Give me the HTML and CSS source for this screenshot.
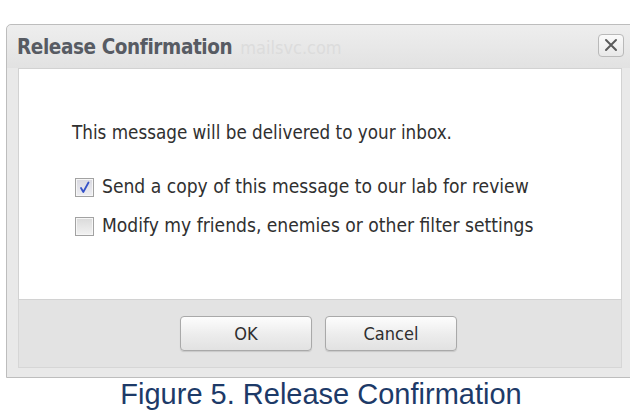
FILE: index.html
```html
<!DOCTYPE html>
<html lang="en">
<head>
<meta charset="utf-8">
<title>Release Confirmation</title>
<link rel="stylesheet" href="styles.css">
</head>
<body>
<div class="page">
  <div class="dialog">
    <div class="titlebar">
      <div class="title">Release Confirmation<span class="ghost">mailsvc.com</span></div>
      <button class="close" aria-label="Close">
        <svg width="14" height="14" viewBox="0 0 14 14"><path d="M2 2 L12 12 M12 2 L2 12" stroke="#5a5a5a" stroke-width="2" stroke-linecap="round"/></svg>
      </button>
    </div>
    <div class="body">
      <p class="message">This message will be delivered to your inbox.</p>
      <label class="option">
        <span class="check checked">
          <svg width="13" height="13" viewBox="0 0 13 13"><path d="M3 7 L5.3 11 L10.5 1.5" fill="none" stroke="#3552c8" stroke-width="1.8" stroke-linecap="round" stroke-linejoin="round"/></svg>
        </span>
        Send a copy of this message to our lab for review
      </label>
      <label class="option">
        <span class="check"></span>
        Modify my friends, enemies or other filter settings
      </label>
    </div>
    <div class="footer">
      <button class="btn">OK</button>
      <button class="btn">Cancel</button>
    </div>
  </div>
  <div class="caption">Figure 5. Release Confirmation</div>
</div>
</body>
</html>
```

FILE: styles.css
```css
html, body {
  margin: 0;
  padding: 0;
  background: #ffffff;
  overflow: hidden;
}

.page {
  width: 630px;
  height: 417px;
  overflow: hidden;
  padding-top: 24px;
  box-sizing: border-box;
}

.dialog {
  margin-left: 6px;
  width: 626px;
  border: 1px solid #bdbdbd;
  border-radius: 5px 0 0 0;
  background: #e9e9e9;
  padding: 0 9px 9px 11px;
  box-sizing: border-box;
  font-family: "DejaVu Sans Condensed", "DejaVu Sans", sans-serif;
}

.titlebar {
  height: 43px;
  margin: 0 -9px 0 -11px;
  padding: 0 7px 0 10px;
  display: flex;
  align-items: center;
  justify-content: space-between;
  background: linear-gradient(#eeeeee, #e2e2e2);
  border-radius: 5px 0 0 0;
}

.title {
  font-size: 20.5px;
  font-weight: bold;
  color: #575b63;
  letter-spacing: -0.4px;
  margin-top: 1px;
  white-space: nowrap;
}

.ghost {
  margin-left: 8px;
  font-weight: normal;
  font-size: 18px;
  color: #dcdcdc;
  letter-spacing: 0;
}

.close {
  width: 26px;
  height: 23px;
  margin-top: -3px;
  padding: 0;
  border: 1px solid #b9b9b9;
  border-radius: 4px;
  background: linear-gradient(#fafafa, #e8e8e8);
  display: flex;
  align-items: center;
  justify-content: center;
}

.body {
  width: 604px;
  height: 232px;
  box-sizing: border-box;
  background: #ffffff;
  border: 1px solid #d2d2d2;
  padding: 52px 0 0 53px;
  color: #303030;
  font-size: 18.7px;
}

.message {
  margin: 0 0 31px 0;
  line-height: 24px;
}

.option {
  display: flex;
  align-items: center;
  gap: 8px;
  height: 22px;
  margin-bottom: 17px;
  margin-left: 3px;
  line-height: 22px;
  font-size: 19.1px;
  white-space: nowrap;
}

.check {
  width: 19px;
  height: 19px;
  box-sizing: border-box;
  border: 1px solid #a2a2a2;
  box-shadow: inset 0 0 0 1px #f6f6f6;
  background: linear-gradient(#dadada, #f2f2f2);
  display: flex;
  align-items: center;
  justify-content: center;
  flex: none;
}

.check.checked {
  background: linear-gradient(#d8d8e0, #eeeef2);
}

.footer {
  width: 604px;
  height: 68px;
  box-sizing: border-box;
  background: #e3e3e3;
  border: 1px solid #d6d6d6;
  border-top: none;
  display: flex;
  justify-content: center;
  align-items: flex-start;
  gap: 13px;
  padding-top: 16px;
  padding-right: 3px;
}

.btn {
  width: 132px;
  height: 35px;
  border: 1px solid #a9a9a9;
  border-radius: 4px;
  background: linear-gradient(#fdfdfd, #ececec 55%, #e2e2e2);
  box-shadow: 0 1px 1px rgba(0, 0, 0, 0.12);
  font-family: "DejaVu Sans Condensed", "DejaVu Sans", sans-serif;
  font-size: 18px;
  color: #2e2e2e;
  padding: 0;
}

.caption {
  margin-top: 0;
  text-align: center;
  padding-left: 12px;
  font-family: "Liberation Sans", Arial, sans-serif;
  font-size: 29px;
  line-height: 32px;
  color: #1d3a68;
  white-space: nowrap;
}
```
